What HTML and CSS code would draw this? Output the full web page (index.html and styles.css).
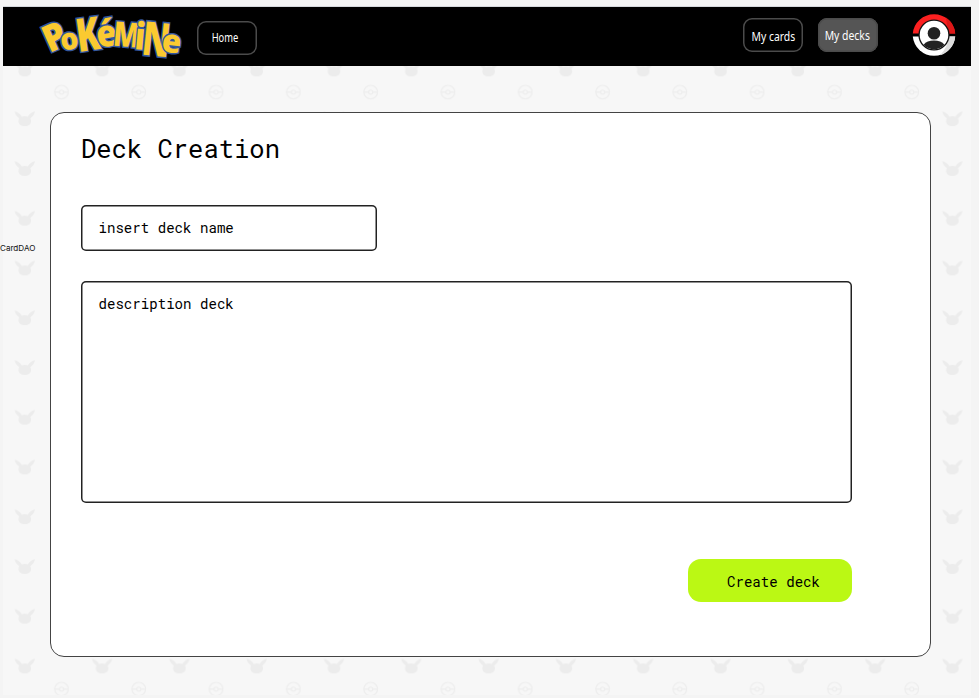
FILE: index.html
```html
<!DOCTYPE html>
<html lang="en">
<head>
<meta charset="utf-8">
<title>Pokémine</title>
<link rel="stylesheet" href="styles.css">
</head>
<body>
<div class="page">
  <svg class="wallpaper" width="968" height="629" aria-hidden="true">
    <defs>
      <pattern id="tile" x="0.3" y="45.2" width="77.3" height="49.75" patternUnits="userSpaceOnUse">
        <g class="creature">
          <path d="M11.3 .3C14 .6 17 3 18.5 5.4Q21.5 4.4 24.5 5.4C26 3 29 .6 31.7 .3C31.2 3.2 29.5 5.4 27 7.2Q27.8 8.5 27.8 10C27.8 13 25.3 15 21.5 15S15.2 13 15.2 10Q15.2 8.5 16 7.2C13.5 5.4 11.8 3.2 11.3 .3Z"/>
        </g>
        <g class="ball"><circle cx="58.2" cy="30.7" r="6.8"/><circle cx="58.2" cy="30.7" r="2.1"/><path d="M51.4 30.7H56M60.4 30.7H65"/></g>
      </pattern>
    </defs>
    <rect width="968" height="629" fill="url(#tile)"/>
  </svg>
  <header class="topbar">
    <svg class="logo" width="146" height="52" viewBox="0 0 146 52" role="img" aria-label="Pokémine">
      <g class="logo-text">
        <text transform="translate(12.5 44) rotate(-24) scale(.95 1)" font-size="37">P</text>
        <text transform="translate(25 42) rotate(-10) scale(.95 1)" font-size="30">o</text>
        <text transform="translate(41.5 43) rotate(-8) scale(.74 1)" font-size="46">K</text>
        <text transform="translate(61.5 39) rotate(-10) scale(.9 1)" font-size="37">é</text>
        <text transform="translate(75.5 36.5) rotate(5) scale(.8 1)" font-size="34">M</text>
        <text transform="translate(97 40) rotate(5) scale(.85 1)" font-size="37">i</text>
        <text transform="translate(104 45.5) rotate(6) scale(.7 1)" font-size="47">N</text>
        <text transform="translate(124 42.5) rotate(6) scale(.98 1)" font-size="32">e</text>
      </g>
    </svg>
    <a class="nav home"><span>Home</span></a>
    <a class="nav cards"><span>My cards</span></a>
    <a class="nav decks"><span>My decks</span></a>
    <svg class="avatar" width="44" height="44" viewBox="0 0 44 44" aria-label="Profile">
      <path d="M.8 20.5A21.3 21.3 0 0 1 43.2 20.5Z" fill="#fc2020"/>
      <path d="M34 4.5A21.3 21.3 0 0 1 43.2 20.5H36Z" fill="#dd1717"/>
      <path d="M.8 23.5A21.3 21.3 0 0 0 43.2 23.5Z" fill="#fff"/>
      <path d="M43.2 23.5A21.3 21.3 0 0 1 28 42.3Q36 34 37 23.5Z" fill="#ddd"/>
      <circle cx="22" cy="22" r="15.6" fill="#111"/>
      <circle cx="22" cy="22" r="14.3" fill="#fff"/>
      <circle cx="22" cy="20.3" r="6.3" fill="#222"/>
      <path d="M11.6 31.8Q15 27.6 22 27.6T32.4 31.8A14.3 14.3 0 0 1 11.6 31.8Z" fill="#222"/>
    </svg>
  </header>
  <main class="card">
    <h1>Deck Creation</h1>
    <div class="field name">insert deck name</div>
    <div class="field description">description deck</div>
    <button class="create" type="button">Create deck</button>
  </main>
</div>
<span class="canvas-note">CardDAO</span>
</body>
</html>
```
FILE: styles.css
```css
* { box-sizing: border-box; }
body {
  margin: 0;
  height: 698px;
  padding: 7px 0 0 3px;
  background: #f4f4f4;
  overflow: hidden;
  position: relative;
}
.page {
  width: 968px;
  height: 688px;
  background: #f7f7f7;
  position: relative;
  box-shadow: 0 -1px 0 #d5d8dc;
}
.wallpaper { position: absolute; left: 0; top: 59px; }
.creature { fill: #ececec; }
.ball { fill: none; stroke: #ededed; stroke-width: 1.2; }
.topbar {
  position: relative;
  height: 59px;
  background: #000;
  display: flex;
  align-items: flex-start;
}
.logo { margin: 2px 0 0 34px; overflow: visible; }
.logo-text {
  font-family: "Open Sans", sans-serif;
  font-weight: 800;
  fill: #fbca30;
  stroke: #34579d;
  stroke-width: 3px;
  stroke-linejoin: miter;
  paint-order: stroke;
}
.nav {
  width: 60px;
  height: 34px;
  box-shadow: inset 0 0 0 1.5px #4b4b4b;
  border-radius: 9px;
  color: #fff;
  font: 13px/34px "Noto Sans", sans-serif;
  display: flex;
  justify-content: center;
  white-space: nowrap;
}
.nav span { display: block; flex: none; transform: scaleX(.8); }
.home { margin: 14px 0 0 14px; }
.home span { transform: translateX(-2.5px) scaleX(.72); line-height: 32px; }
.cards { margin: 11px 0 0 486px; }
.cards span { line-height: 36px; }
.decks { margin: 11px 0 0 15px; background: #555; }
.decks span { transform: translateX(-1px) scaleX(.8); line-height: 35px; }
.avatar { margin: 6px 0 0 34px; }
.card {
  position: relative;
  margin: 46px 0 0 47px;
  width: 881px;
  height: 545px;
  padding: 18px 30px;
  background: #fff;
  border: 1px solid #444;
  border-radius: 14px;
  font-family: "Roboto Mono", "DejaVu Sans Mono", monospace;
  color: #000;
  display: flex;
  flex-direction: column;
}
h1 { margin: 0; font-size: 25.5px; line-height: 34px; font-weight: 400; }
.field {
  box-shadow: inset 0 0 0 1.5px #222;
  border-radius: 5px;
  padding-left: 17.5px;
  font-size: 14.1px;
}
.name { width: 296px; height: 46px; margin-top: 39.5px; line-height: 45px; }
.description { width: 770.5px; height: 222.5px; margin-top: 30px; line-height: 45px; }
.create {
  width: 164px;
  height: 43px;
  margin: 56px 0 0 607px;
  padding: 2px 0 0 7px;
  border: 0;
  border-radius: 13px;
  background: #bbf814;
  color: #000;
  font: 14.1px "Roboto Mono", "DejaVu Sans Mono", monospace;
}
.canvas-note {
  position: absolute;
  left: 0;
  top: 242px;
  font: 8.1px/13px Inter, sans-serif;
  color: #111;
}
```
